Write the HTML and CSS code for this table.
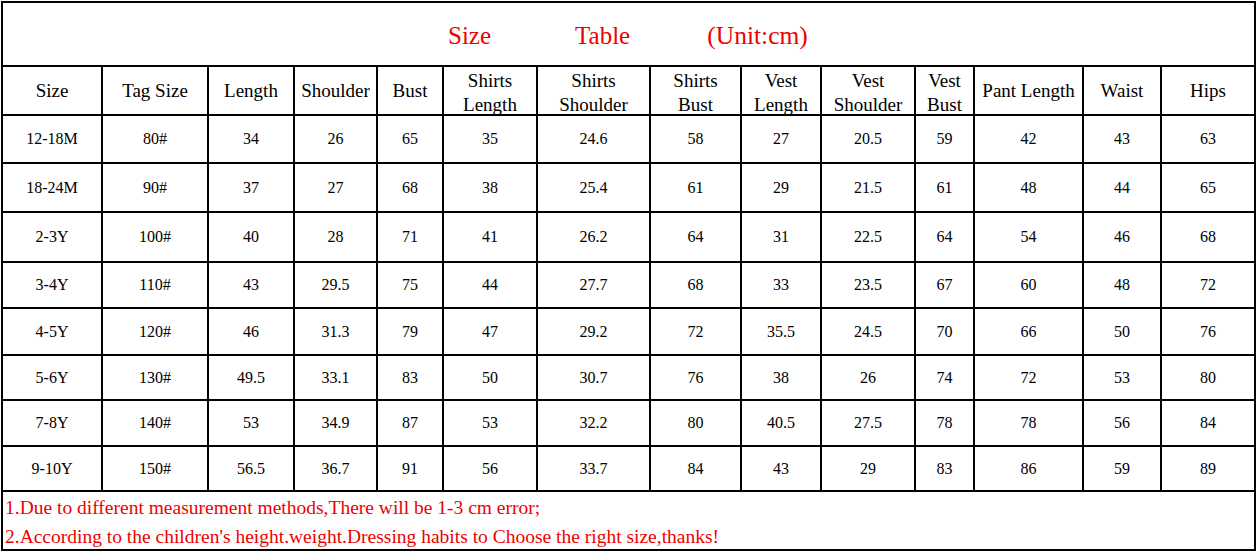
FILE: index.html
```html
<!DOCTYPE html>
<html>
<head>
<meta charset="utf-8">
<link rel="stylesheet" href="styles.css">
</head>
<body>
<div class="sheet">
  <div class="title"><span class="t1">Size</span><span class="t2">Table</span><span class="t3">(Unit:cm)</span></div>

  <div class="hd">Size</div>
  <div class="hd">Tag Size</div>
  <div class="hd">Length</div>
  <div class="hd">Shoulder</div>
  <div class="hd">Bust</div>
  <div class="hd two">Shirts<br>Length</div>
  <div class="hd two">Shirts<br>Shoulder</div>
  <div class="hd two">Shirts<br>Bust</div>
  <div class="hd two">Vest<br>Length</div>
  <div class="hd two">Vest<br>Shoulder</div>
  <div class="hd two">Vest<br>Bust</div>
  <div class="hd">Pant Length</div>
  <div class="hd">Waist</div>
  <div class="hd">Hips</div>

  <div class="c">12-18M</div><div class="c">80#</div><div class="c">34</div><div class="c">26</div><div class="c">65</div><div class="c">35</div><div class="c">24.6</div><div class="c">58</div><div class="c">27</div><div class="c">20.5</div><div class="c">59</div><div class="c">42</div><div class="c">43</div><div class="c">63</div>
  <div class="c">18-24M</div><div class="c">90#</div><div class="c">37</div><div class="c">27</div><div class="c">68</div><div class="c">38</div><div class="c">25.4</div><div class="c">61</div><div class="c">29</div><div class="c">21.5</div><div class="c">61</div><div class="c">48</div><div class="c">44</div><div class="c">65</div>
  <div class="c">2-3Y</div><div class="c">100#</div><div class="c">40</div><div class="c">28</div><div class="c">71</div><div class="c">41</div><div class="c">26.2</div><div class="c">64</div><div class="c">31</div><div class="c">22.5</div><div class="c">64</div><div class="c">54</div><div class="c">46</div><div class="c">68</div>
  <div class="c">3-4Y</div><div class="c">110#</div><div class="c">43</div><div class="c">29.5</div><div class="c">75</div><div class="c">44</div><div class="c">27.7</div><div class="c">68</div><div class="c">33</div><div class="c">23.5</div><div class="c">67</div><div class="c">60</div><div class="c">48</div><div class="c">72</div>
  <div class="c">4-5Y</div><div class="c">120#</div><div class="c">46</div><div class="c">31.3</div><div class="c">79</div><div class="c">47</div><div class="c">29.2</div><div class="c">72</div><div class="c">35.5</div><div class="c">24.5</div><div class="c">70</div><div class="c">66</div><div class="c">50</div><div class="c">76</div>
  <div class="c">5-6Y</div><div class="c">130#</div><div class="c">49.5</div><div class="c">33.1</div><div class="c">83</div><div class="c">50</div><div class="c">30.7</div><div class="c">76</div><div class="c">38</div><div class="c">26</div><div class="c">74</div><div class="c">72</div><div class="c">53</div><div class="c">80</div>
  <div class="c">7-8Y</div><div class="c">140#</div><div class="c">53</div><div class="c">34.9</div><div class="c">87</div><div class="c">53</div><div class="c">32.2</div><div class="c">80</div><div class="c">40.5</div><div class="c">27.5</div><div class="c">78</div><div class="c">78</div><div class="c">56</div><div class="c">84</div>
  <div class="c">9-10Y</div><div class="c">150#</div><div class="c">56.5</div><div class="c">36.7</div><div class="c">91</div><div class="c">56</div><div class="c">33.7</div><div class="c">84</div><div class="c">43</div><div class="c">29</div><div class="c">83</div><div class="c">86</div><div class="c">59</div><div class="c">89</div>

  <div class="notes">
    <div class="note">1.Due to different measurement methods,There will be 1-3 cm error;</div>
    <div class="note">2.According to the children's height.weight.Dressing habits to Choose the right size,thanks!</div>
  </div>
</div>
</body>
</html>
```

FILE: styles.css
```css
html, body {
  margin: 0;
  padding: 0;
  background: #ffffff;
}

body {
  font-family: "Liberation Serif", "Times New Roman", serif;
  color: #000;
}

.sheet {
  margin: 1px 0 0 1px;
  width: 1251px;
  padding: 2px;
  background: #000;
  display: grid;
  grid-template-columns: 98px 104px 84px 81px 64px 92px 111px 89px 78px 92px 57px 107px 76px 92px;
  grid-template-rows: 62px 47px 46px 47px 48px 44px 45px 43px 44px 43px 57px;
  gap: 2px;
}

.title {
  grid-column: 1 / -1;
  background: #fff;
  display: flex;
  align-items: center;
  padding: 3px 0 0 445px;
  font-size: 25px;
  color: #ee0000;
  white-space: nowrap;
}

.t2 {
  margin-left: 84px;
}

.t3 {
  margin-left: 77px;
  font-size: 25.5px;
}

.hd {
  background: #fff;
  font-size: 19px;
  display: flex;
  align-items: center;
  justify-content: center;
  text-align: center;
  white-space: nowrap;
}

.hd.two {
  align-items: flex-start;
  line-height: 24px;
  padding-top: 2px;
  box-sizing: border-box;
}

.c {
  background: #fff;
  font-size: 16px;
  display: flex;
  align-items: center;
  justify-content: center;
  white-space: nowrap;
}

.notes {
  grid-column: 1 / -1;
  background: #fff;
  padding: 1px 0 0 2px;
  font-size: 19.5px;
  line-height: 29px;
  color: #ee0000;
  white-space: nowrap;
}
```
